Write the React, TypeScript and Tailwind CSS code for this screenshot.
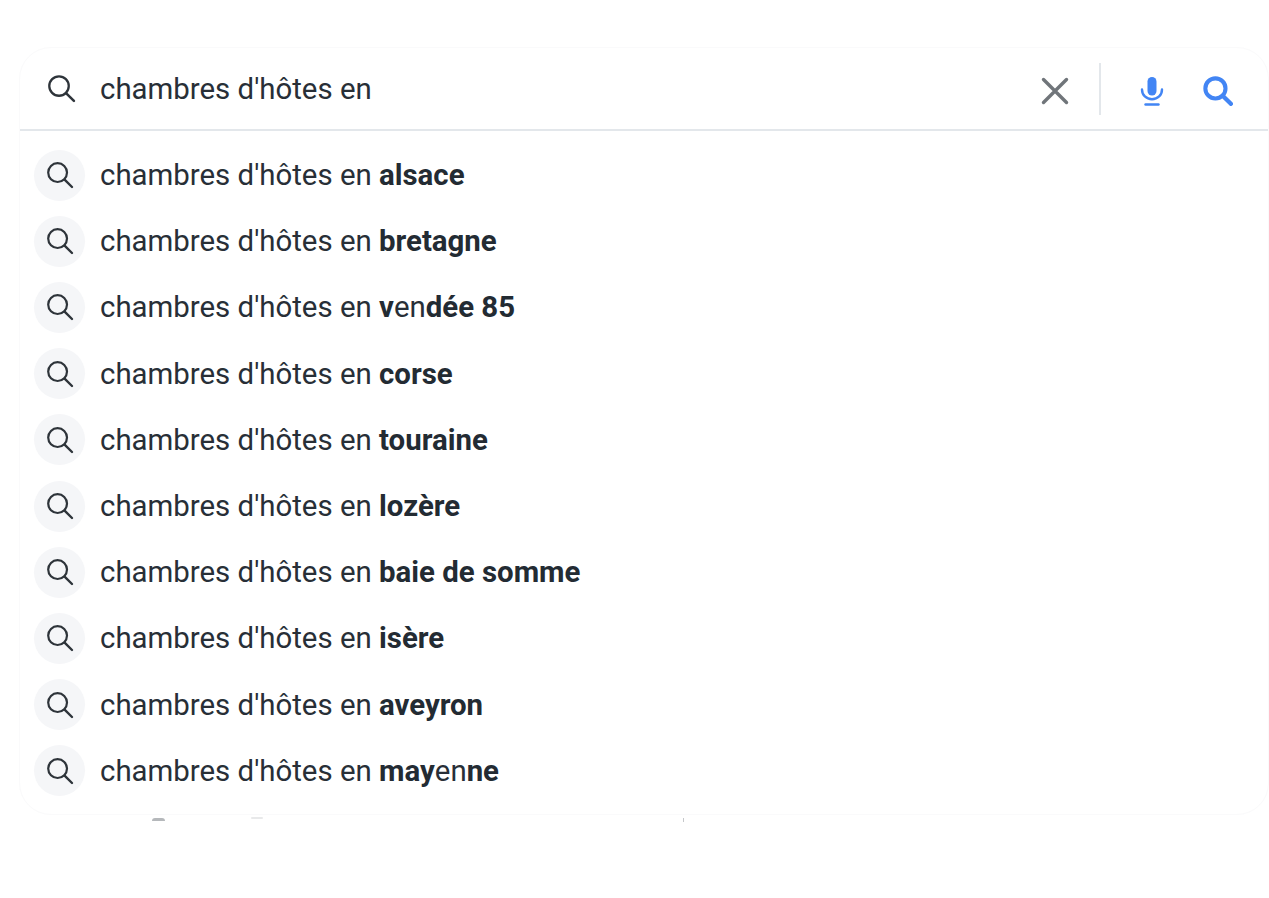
const rows: [string, boolean][][] = [
  [["alsace", true]],
  [["bretagne", true]],
  [["v", true], ["en", false], ["dée 85", true]],
  [["corse", true]],
  [["touraine", true]],
  [["lozère", true]],
  [["baie de somme", true]],
  [["isère", true]],
  [["aveyron", true]],
  [["may", true], ["en", false], ["ne", true]],
];

function SearchIcon({ className, w = 2.2 }: { className: string; w?: number }) {
  return (
    <svg viewBox="0 0 28 28" className={className} fill="none" stroke="currentColor" strokeLinecap="round">
      <circle cx="11.6" cy="11.6" r="9.4" strokeWidth={w} />
      <path d="M18.6 18.6 26 26" strokeWidth={w + 0.2} />
    </svg>
  );
}

export default function App() {
  return (
    <div className="min-h-[898px] bg-white pt-[47px] pl-[19px] font-['Roboto',sans-serif] text-[#282f37]">
      <div className="relative">
        <div className="flex h-[768px] flex-col rounded-[32px] border border-[#fafafb] bg-white">
          <div className="flex h-[83px] shrink-0 items-center border-b-2 border-[#e3e7eb] pl-[27px] pr-[35px]">
            <SearchIcon className="h-[29px] w-[29px] text-[#2e343a]" />
            <span className="ml-[24px] text-[29.4px] leading-[40px]">chambres d'hôtes en</span>
            <div className="ml-auto flex items-center">
              <svg viewBox="0 0 28 28" className="mt-[4px] h-[28px] w-[28px] text-[#70757a]" fill="none" stroke="currentColor" strokeWidth="3.4" strokeLinecap="round">
                <path d="M2.5 2.5 25.5 25.5M25.5 2.5 2.5 25.5" />
              </svg>
              <div className="ml-[30px] h-[52px] w-[2px] bg-[#e3e7eb]" />
              <svg viewBox="0 0 24 30" className="ml-[39px] mt-[4px] h-[30px] w-[24px] text-[#4285f4]" fill="none">
                <rect x="7.5" y="1" width="9" height="18.5" rx="4.5" fill="currentColor" />
                <path d="M2 13.5c0 5.6 4.3 9.7 10 9.7s10-4.1 10-9.7" stroke="currentColor" strokeWidth="2.4" strokeLinecap="round" />
                <path d="M5.5 28.5h13" stroke="currentColor" strokeWidth="2.4" strokeLinecap="round" />
              </svg>
              <SearchIcon w={3.8} className="ml-[39px] mt-[4px] h-[30px] w-[30px] text-[#4285f4]" />
            </div>
          </div>
          <div className="flex flex-col pt-[11px] pl-[14px]">
            {rows.map((parts, i) => (
              <div key={i} className="flex h-[66.2px] items-center">
                <div className="flex h-[51px] w-[51px] items-center justify-center rounded-full bg-[#f5f6f8]">
                  <SearchIcon className="h-[28px] w-[28px] text-[#2e343a]" />
                </div>
                <span className="ml-[15px] text-[29.4px] leading-[40px]">
                  chambres d'hôtes en{" "}
                  {parts.map(([t, b], j) => (
                    <span key={j} className={b ? "font-bold text-[#232b33]" : ""}>{t}</span>
                  ))}
                </span>
              </div>
            ))}
          </div>
        </div>
        <div className="absolute left-[133px] top-[771px] h-[3px] w-[13px] rounded-t-full bg-[#b5b8bb]" />
        <div className="absolute left-[232px] top-[770px] h-[2px] w-[12px] rounded-full bg-[#e8e9ea]" />
        <div className="absolute left-[664px] top-[771px] h-[4px] w-[1px] bg-[#c5c7ca]" />
      </div>
    </div>
  );
}
